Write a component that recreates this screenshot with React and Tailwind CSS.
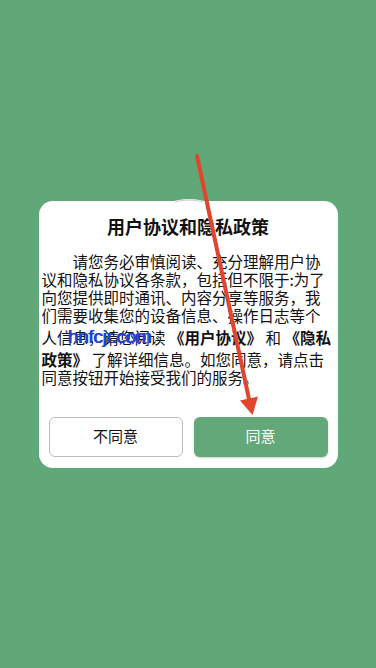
import React from 'react';

const cjk = "font-['Noto_Sans_CJK_SC','Noto_Sans',sans-serif]";

const PolicyDialog = () => {
  return (
    <div className={`relative w-[299px] h-[267px] bg-white rounded-[14px] flex flex-col ${cjk} text-[#111]`}>
      {/* little bump on the top edge */}
      <svg className="absolute left-[120px] top-[-8px]" width="60" height="14" viewBox="0 0 60 14">
        <path d="M0 14 Q30 -2 60 14 Z" fill="#fff" />
        <path d="M16 9 Q30 5 44 9" fill="none" stroke="#c9cfcb" strokeWidth="1" />
      </svg>

      <h2 className="mt-[14px] h-[22px] leading-[22px] text-center text-[18px] font-bold">
        用户协议和隐私政策
      </h2>

      <div className="mt-[15px] pl-[3px] text-[15.5px] leading-[18px] whitespace-nowrap">
        <div className="indent-[31px]">请您务必审慎阅读、充分理解用户协</div>
        <div>议和隐私协议各条款，包括但不限于:为了</div>
        <div>向您提供即时通讯、内容分享等服务，我</div>
        <div>们需要收集您的设备信息、操作日志等个</div>
        <div className="mt-[4px]">
          人信息，请您阅读 <b>《用户协议》</b> 和 <b>《隐私</b>
        </div>
        <div className="mt-[4px]">
          <b>政策》</b> 了解详细信息。如您同意，请点击
        </div>
        <div>同意按钮开始接受我们的服务。</div>
      </div>

      <div className="mt-[31px] px-[10px] flex gap-[11px]">
        <button className="w-[134px] h-[40px] rounded-[6px] border border-[#bdbdbd] bg-white text-[15px] text-[#111]">
          不同意
        </button>
        <button className="w-[134px] h-[40px] rounded-[6px] bg-[#62a878] text-[15px] text-white shadow-[0_1px_2px_rgba(0,0,0,0.2)]">
          同意
        </button>
      </div>

      {/* site watermark */}
      <span className="absolute left-[29px] top-[126px] leading-none text-[19px] tracking-[-0.3px] font-['Liberation_Sans',Arial,sans-serif] text-[#1f43d4] [text-shadow:1px_0_0_#1f43d4]">
        hnfcjr.com
      </span>
    </div>
  );
};

export default function App() {
  return (
    <div className="relative w-[376px] h-[668px] bg-[#60a878] flex items-center justify-center overflow-hidden">
      <PolicyDialog />

      {/* red annotation arrow */}
      <svg className="absolute inset-0 pointer-events-none" width="376" height="668" viewBox="0 0 376 668">
        <line x1="197" y1="156" x2="249" y2="399" stroke="#e2452d" strokeWidth="4" strokeLinecap="round" />
        <polygon points="252.5,415 240,400.5 258,396.5" fill="#e2452d" />
      </svg>
    </div>
  );
}
